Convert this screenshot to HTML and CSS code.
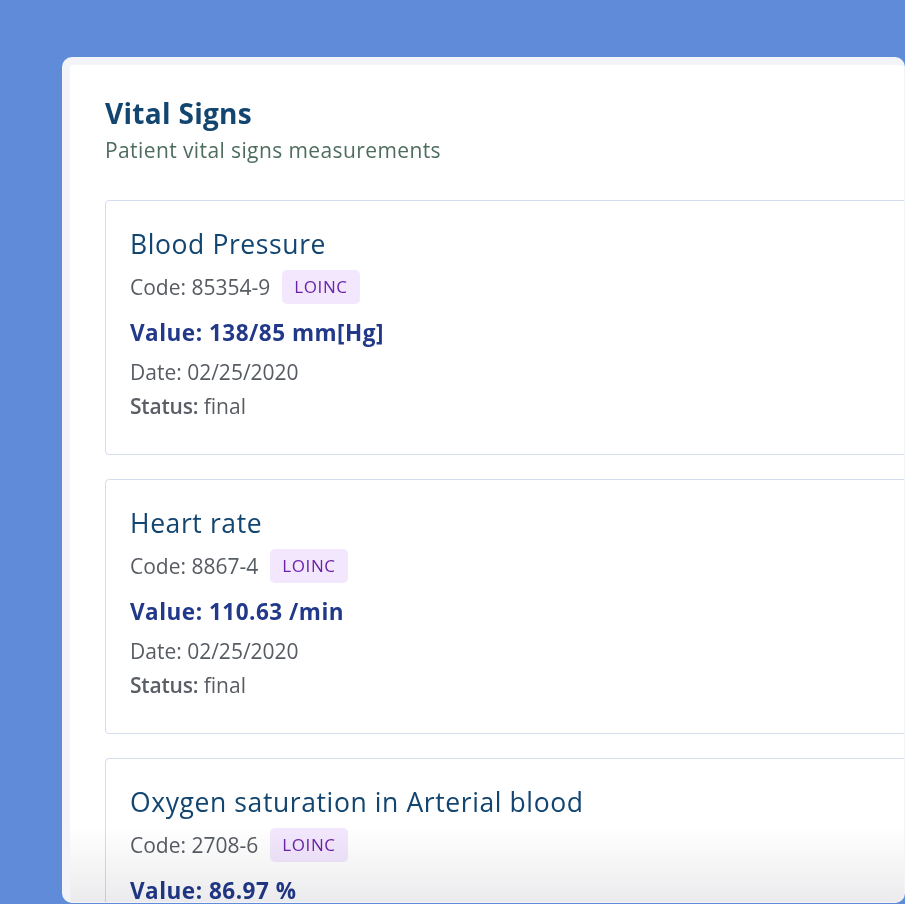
FILE: index.html
```html
<!DOCTYPE html>
<html lang="en">
<head>
<meta charset="utf-8">
<title>Vital Signs</title>
<link rel="stylesheet" href="styles.css">
</head>
<body>
<main class="panel">
  <header class="panel-head">
    <h1 class="panel-title">Vital Signs</h1>
    <p class="panel-sub">Patient vital signs measurements</p>
  </header>
  <section class="list">
    <article class="card">
      <h2 class="card-title">Blood Pressure</h2>
      <div class="code-row"><span class="code">Code: 85354-9</span><span class="badge">LOINC</span></div>
      <p class="value">Value: 138/85 mm[Hg]</p>
      <p class="meta date">Date: 02/25/2020</p>
      <p class="meta status"><span class="label">Status:</span> final</p>
    </article>
    <article class="card">
      <h2 class="card-title">Heart rate</h2>
      <div class="code-row"><span class="code">Code: 8867-4</span><span class="badge">LOINC</span></div>
      <p class="value">Value: 110.63 /min</p>
      <p class="meta date">Date: 02/25/2020</p>
      <p class="meta status"><span class="label">Status:</span> final</p>
    </article>
    <article class="card">
      <h2 class="card-title">Oxygen saturation in Arterial blood</h2>
      <div class="code-row"><span class="code">Code: 2708-6</span><span class="badge">LOINC</span></div>
      <p class="value">Value: 86.97 %</p>
      <p class="meta date">Date: 02/25/2020</p>
      <p class="meta status"><span class="label">Status:</span> final</p>
    </article>
  </section>
  <div class="fade"></div>
</main>
</body>
</html>
```

FILE: styles.css
```css
* { box-sizing: border-box; }
html, body { margin: 0; padding: 0; }
body {
  background: #5f8bd9;
  width: 905px;
  height: 904px;
  overflow: hidden;
  font-family: "Open Sans", "Noto Sans", sans-serif;
  padding: 57px 0 0 62px;
}
.panel {
  position: relative;
  width: 843px;
  height: 846px;
  background: #ffffff;
  border-style: solid;
  border-color: #f3f4f7;
  border-width: 8px 1px 1px 8px;
  border-radius: 10px;
  overflow: hidden;
  padding: 30px 0 0 35px;
}
.panel-head { margin-bottom: 36px; }
.panel-title {
  margin: 0;
  font-size: 28px;
  font-weight: 700;
  letter-spacing: 0.3px;
  color: #124570;
  line-height: 36px;
}
.panel-sub {
  margin: 6px 0 0;
  font-size: 21px;
  letter-spacing: 0.4px;
  color: #4f6d5f;
  line-height: 27px;
}
.list {
  display: flex;
  flex-direction: column;
  gap: 24px;
  width: 860px;
}
.card {
  border: 1px solid #d4ddec;
  border-radius: 4px;
  height: 255px;
  padding: 26px 24px 0;
  flex: none;
}
.card-title {
  margin: 0;
  font-size: 26.5px;
  font-weight: 400;
  letter-spacing: 0.6px;
  color: #124570;
  line-height: 34px;
}
.code-row {
  display: flex;
  align-items: center;
  gap: 12px;
  margin-top: 9px;
}
.code {
  font-size: 21px;
  color: #575c63;
  line-height: 34px;
}
.badge {
  background: #f2e7fc;
  color: #6b22a8;
  font-size: 17px;
  border-radius: 5px;
  padding: 0 12px;
  line-height: 34px;
  letter-spacing: 0.6px;
}
.value {
  margin: 14px 0 0;
  font-size: 22.5px;
  font-weight: 700;
  letter-spacing: 0.5px;
  color: #22398a;
  line-height: 30px;
}
.meta {
  font-size: 21px;
  color: #575c63;
  line-height: 26px;
}
.date { margin: 11px 0 0; }
.status { margin: 8px 0 0; }
.label { font-weight: 600; color: #5a5f66; letter-spacing: -0.2px; }
.fade {
  position: absolute;
  left: 0;
  right: 0;
  bottom: 0;
  height: 75px;
  background: linear-gradient(to bottom, #ffffff, #ebebed);
  mix-blend-mode: multiply;
  pointer-events: none;
}
```
